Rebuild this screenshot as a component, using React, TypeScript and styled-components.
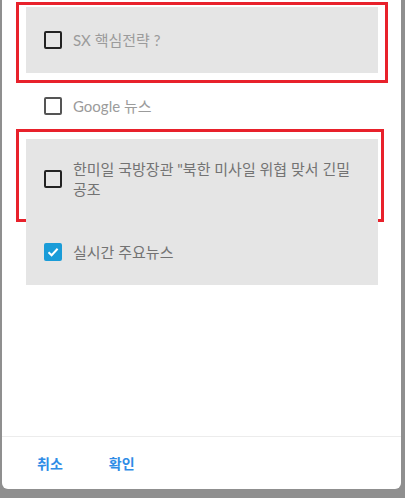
import React from "react";
import styled, { createGlobalStyle } from "styled-components";

const Global = createGlobalStyle`
  html, body { margin: 0; padding: 0; }
  body {
    background: #8f8f8f;
    width: 405px;
    height: 498px;
    overflow: hidden;
    font-family: "Lato", "Noto Sans CJK KR", sans-serif;
  }
`;

const Page = styled.div`
  width: 405px;
  height: 498px;
  display: flex;
  align-items: flex-start;
  padding-left: 2px;
  box-sizing: border-box;
`;

const Dialog = styled.div`
  width: 399px;
  height: 489px;
  background: #fff;
  border-radius: 0 0 6px 6px;
  display: flex;
  flex-direction: column;
  overflow: hidden;
`;

const List = styled.div`
  flex: 1;
  display: flex;
  flex-direction: column;
  padding: 7px 23px 0 24px;
`;

const Row = styled.label<{ $grey?: boolean; $dark?: boolean }>`
  position: relative;
  display: flex;
  align-items: center;
  gap: 11px;
  min-height: 66px;
  box-sizing: border-box;
  padding: 20px 18px;
  background: ${(p) => (p.$grey ? "#e5e5e5" : "transparent")};
  color: ${(p) => (p.$dark ? "#737373" : "#9b9b9b")};
  font-size: 15px;
  line-height: 20px;
`;

const Highlight = styled.span<{ $t: number; $r: number; $b: number; $l: number }>`
  position: absolute;
  top: ${(p) => p.$t}px;
  right: ${(p) => p.$r}px;
  bottom: ${(p) => p.$b}px;
  left: ${(p) => p.$l}px;
  border: 3px solid #e8212b;
  pointer-events: none;
`;

const Box = styled.span<{ $checked?: boolean; $soft?: boolean }>`
  flex: none;
  width: 18px;
  height: 18px;
  box-sizing: border-box;
  border-radius: 2px;
  border: 2px solid
    ${(p) => (p.$checked ? "#1a9cd8" : p.$soft ? "#555" : "#222")};
  background: ${(p) => (p.$checked ? "#1a9cd8" : "transparent")};
  display: flex;
  align-items: center;
  justify-content: center;
`;

const Text = styled.span`
  flex: 1;
`;

const Footer = styled.div`
  height: 52px;
  border-top: 1px solid #ececec;
  display: flex;
  align-items: center;
  gap: 22px;
  padding-left: 23px;
`;

const Button = styled.button`
  border: none;
  background: none;
  padding: 8px 12px;
  font-family: "Noto Sans CJK KR", sans-serif;
  font-weight: 700;
  font-size: 14px;
  color: #2f8ce6;
  cursor: pointer;
`;

const Check = () => (
  <svg width="14" height="14" viewBox="0 0 14 14">
    <path d="M2.5 7.2 L5.6 10.2 L11.6 3.8" fill="none" stroke="#fff" strokeWidth="2" />
  </svg>
);

export default function App() {
  return (
    <>
      <Global />
      <Page>
        <Dialog>
          <List>
            <Row $grey>
              <Box />
              <Text>SX 핵심전략 ?</Text>
              <Highlight $t={-5} $r={-10} $b={-10} $l={-10} />
            </Row>
            <Row>
              <Box $soft />
              <Text>Google 뉴스</Text>
            </Row>
            <Row $grey $dark>
              <Box />
              <Text>한미일 국방장관 "북한 미사일 위협 맞서 긴밀 공조</Text>
              <Highlight $t={-10} $r={-6} $b={-3} $l={-10} />
            </Row>
            <Row $grey $dark>
              <Box $checked>
                <Check />
              </Box>
              <Text>실시간 주요뉴스</Text>
            </Row>
          </List>
          <Footer>
            <Button>취소</Button>
            <Button>확인</Button>
          </Footer>
        </Dialog>
      </Page>
    </>
  );
}
